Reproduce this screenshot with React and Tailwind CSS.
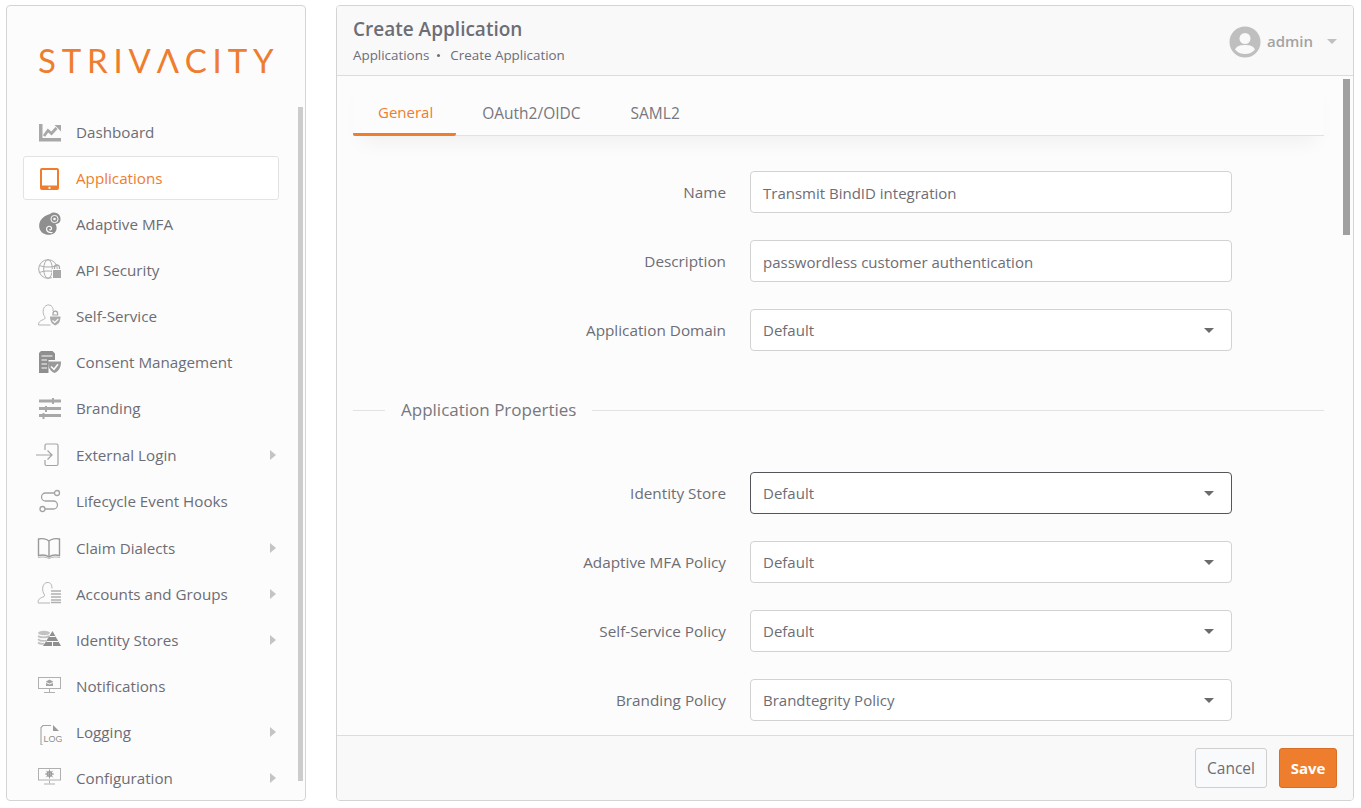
// App.jsx
import React from 'react';

const G = '#a3a3a3';

const iconProps = { width: 26, height: 26, viewBox: '0 0 26 26', fill: 'none' };

const DashboardIcon = () => (
    <svg {...iconProps}>
        <path d="M3 5h3.500v14H25v3.500H3z" fill="#a8a8a8" />
        <path d="M8 17l4-5.500 3.500 3 5-5.500" stroke="#a8a8a8" strokeWidth="2.800" />
        <path d="M18.500 6H25v6.500z" fill="#a8a8a8" />
    </svg>
);

const TabletIcon = () => (
    <svg {...iconProps}>
        <rect x="4" y="3" width="19" height="22" rx="2" fill="#ef7d2e" />
        <rect x="6" y="5" width="15" height="15.500" fill="#fff" />
        <rect x="12.500" y="21.800" width="2" height="2" fill="#fff" />
    </svg>
);

const ChameleonIcon = () => (
    <svg {...iconProps}>
        <path d="M14 3a6.500 6.500 0 0 1 10.500 5.500c0 3-2.500 4.500-5 4.500 1.800 3 1.500 6.500-1 9-2.800 2.200-7.500 2.500-11 .5C3 20 2 14 4.500 9.500 6.500 6 10.500 4 14 3z" fill="#8f8f8f" />
        <circle cx="18.500" cy="8" r="3.600" fill="#8f8f8f" stroke="#fcfcfc" strokeWidth="1" />
        <circle cx="18.500" cy="8" r="1.300" fill="#fcfcfc" />
        <path d="M16.500 21.500c-3.500.5-6-1-6-3.500s3-3.500 4.500-2 0 3.500-1.800 2.500" stroke="#fcfcfc" strokeWidth="1.200" />
    </svg>
);

const GlobeLockIcon = () => (
    <svg {...iconProps}>
        <circle cx="12" cy="12" r="9.300" stroke="#ababab" strokeWidth="1" />
        <ellipse cx="12" cy="12" rx="4.300" ry="9.300" stroke="#ababab" strokeWidth="1" />
        <path d="M3.500 8.500c5 2 12 2 17 0M3.500 15.500c5-2 12-2 17 0" stroke="#ababab" strokeWidth="1" />
        <rect x="16.500" y="12.500" width="9" height="9" fill="#a8a8a8" stroke="#fcfcfc" strokeWidth="1" />
        <path d="M18.500 12v-1.500a2.500 2.500 0 0 1 5 0V12" stroke="#a8a8a8" strokeWidth="1.300" />
    </svg>
);

const SelfServiceIcon = () => (
    <svg {...iconProps}>
        <g transform="translate(0 -1.500)">
            <path d="M2.500 23.500c0-4 3-4.500 6-6 1-1 .5-2-.5-3.500-1.500-3-1.500-9 3.500-10.500 4-.5 6 2.500 5.500 6" stroke="#b5b5b5" strokeWidth="1" />
            <path d="M2.500 23.500h12" stroke="#b5b5b5" strokeWidth="1" />
            <path d="M17 12a2.300 2.300 0 0 1 4.600 0v1.500H17z" stroke={G} strokeWidth="1.200" />
            <path d="M14 15h10.500c0 4.500-1.500 7.500-5.200 9-3.800-1.500-5.300-4.500-5.300-9z" fill="#ababab" />
            <path d="M16.500 19l2.300 2 3.500-3.500" stroke="#fcfcfc" strokeWidth="1.200" />
        </g>
    </svg>
);

const ConsentIcon = () => (
    <svg {...iconProps}>
        <path d="M5 2h11.500L19 4.500V11h-6.500v13H3V4z" fill="#8f8f8f" />
        <path d="M5.500 7h11M5.500 11h5.500M5.500 15h5.500M5.500 19h5.500" stroke="#fcfcfc" strokeWidth="1.200" />
        <path d="M12 12.500h13c0 6-2 9.500-6.500 11.500-4.500-2-6.500-5.500-6.500-11.500z" fill="#9a9a9a" />
        <path d="M15 17.500l3 2.800 4-5" stroke="#fcfcfc" strokeWidth="1.500" />
    </svg>
);

const SlidersIcon = () => (
    <svg {...iconProps}>
        <path d="M3 6h22M3 13.500h22M3 20.500h22" stroke="#a8a8a8" strokeWidth="3" />
        <path d="M17 3v6M10 11v6M7.500 18v6" stroke="#a8a8a8" strokeWidth="2" />
    </svg>
);

const LoginIcon = () => (
    <svg {...iconProps}>
        <path d="M9 8V3.500a1.500 1.500 0 0 1 1.500-1.500h10A1.500 1.500 0 0 1 22 3.500v18.500a1.500 1.500 0 0 1-1.500 1.500h-10A1.500 1.500 0 0 1 9 22v-4" stroke={G} strokeWidth="1.200" />
        <path d="M0 13h16M11.500 8.500L16 13l-4.500 4.500" stroke={G} strokeWidth="1.200" />
    </svg>
);

const HooksIcon = () => (
    <svg {...iconProps}>
        <path d="M18 5h-8.500a4 4 0 0 0 0 8h8a4 4 0 0 1 0 8H9" stroke={G} strokeWidth="1.300" />
        <circle cx="21" cy="5" r="2.500" stroke={G} strokeWidth="1.300" />
        <circle cx="6.500" cy="21" r="2.500" stroke={G} strokeWidth="1.300" />
    </svg>
);

const BookIcon = () => (
    <svg {...iconProps}>
        <path d="M13 6c-2-2-7-3-10.500-2v16.500c4-1 8-.5 10.500 1.500 2.500-2 6.500-2.500 10.500-1.500V4C20 3 15 4 13 6zM13 6v16" stroke="#9a9a9a" strokeWidth="1.400" />
        <path d="M2 22.500c4-1 8-.5 11 1 3-1.500 7-2 11-1" stroke="#b5b5b5" strokeWidth="1" />
    </svg>
);

const AccountsIcon = () => (
    <svg {...iconProps}>
        <path d="M2 21.500c0-4 3-4.500 6-6 1-1 .5-2-.5-3.500C6 9 6 2.500 11 1.500c3.500-.3 5 2 5 6" stroke="#b5b5b5" strokeWidth="1" />
        <path d="M2 22h12" stroke="#b5b5b5" strokeWidth="1" />
        <path d="M15 10h10M15 13h10M15 16h10M15 19h10M15 21.500h10" stroke="#b0b0b0" strokeWidth="1.400" />
    </svg>
);

const StoresIcon = () => (
    <svg {...iconProps}>
        <ellipse cx="8" cy="6" rx="6" ry="2.200" fill="#c2c2c2" />
        <path d="M2 9c2 1.800 9 1.800 11 0M2 12.200c2 1.500 6 1.800 8 1.300M2 15.500c1.500 1.200 4 1.500 6 1.200" stroke="#c2c2c2" strokeWidth="1.700" />
        <path d="M16.500 4l8.500 15H7z" fill="#8f8f8f" />
        <path d="M10.500 14.500h12M16.500 14.500v5M13.500 9.500h6" stroke="#fcfcfc" strokeWidth="1" />
    </svg>
);

const NotificationsIcon = () => (
    <svg {...iconProps}>
        <rect x="2.500" y="4.500" width="22" height="11" stroke="#b0b0b0" strokeWidth="1" />
        <path d="M13.500 16v3M8 19.500h11" stroke="#b0b0b0" strokeWidth="1" />
        <path d="M10 8.500l3.500-2 3.500 2v4.500h-7z" fill="#a3a3a3" />
        <path d="M10 9.500l3.500 1.500 3.500-1.500" stroke="#fcfcfc" strokeWidth="1" />
    </svg>
);

const LogIcon = () => (
    <svg {...iconProps}>
        <path d="M15 6.500H7L5 8.500v17.500h2" stroke={G} strokeWidth="1.100" />
        <path d="M17 6l6 6h-6z" fill="#9a9a9a" />
        <text x="7.500" y="22.500" fontSize="9" fill="#8f8f8f" fontFamily="Liberation Sans, sans-serif">LOG</text>
    </svg>
);

const ConfigIcon = () => (
    <svg {...iconProps}>
        <rect x="2.500" y="3.500" width="22" height="11.500" stroke="#b0b0b0" strokeWidth="1" />
        <path d="M13.500 15.500v3M8 19h11" stroke="#b0b0b0" strokeWidth="1" />
        <circle cx="13.500" cy="9" r="2.300" stroke="#9a9a9a" strokeWidth="1.200" />
        <path d="M13.500 4.500v9M9 9h9M10.300 5.800l6.400 6.400M16.700 5.800l-6.400 6.400" stroke="#9a9a9a" strokeWidth="1" />
    </svg>
);

const menuItems = [
    { label: 'Dashboard', icon: DashboardIcon },
    { label: 'Applications', icon: TabletIcon, active: true },
    { label: 'Adaptive MFA', icon: ChameleonIcon },
    { label: 'API Security', icon: GlobeLockIcon },
    { label: 'Self-Service', icon: SelfServiceIcon },
    { label: 'Consent Management', icon: ConsentIcon },
    { label: 'Branding', icon: SlidersIcon },
    { label: 'External Login', icon: LoginIcon, arrow: true, spaced: true },
    { label: 'Lifecycle Event Hooks', icon: HooksIcon },
    { label: 'Claim Dialects', icon: BookIcon, arrow: true, spaced: true },
    { label: 'Accounts and Groups', icon: AccountsIcon, arrow: true },
    { label: 'Identity Stores', icon: StoresIcon, arrow: true },
    { label: 'Notifications', icon: NotificationsIcon },
    { label: 'Logging', icon: LogIcon, arrow: true },
    { label: 'Configuration', icon: ConfigIcon, arrow: true },
];

const Caret = ({ className }) => (
    <span className={`w-0 h-0 border-x-[5px] border-x-transparent border-t-[5px] ${className}`} />
);

const MenuItem = ({ item }) => {
    const Icon = item.icon;
    return (
        <div className={item.spaced ? 'pt-[2px] pb-[1px]' : 'py-[1px]'}>
            <div
                className={`h-[44px] flex items-center pl-[12px] pr-[2px] rounded-[3px] border text-[15.2px] ${
                    item.active
                        ? 'bg-white border-[#e3e3e3] text-[#ef7d2e]'
                        : 'border-transparent text-[#6d6d75]'
                }`}
            >
                <span className="w-[40px] flex-shrink-0"><Icon /></span>
                <span className="flex-1 whitespace-nowrap">{item.label}</span>
                {item.arrow && (
                    <span className="w-0 h-0 border-y-[5px] border-y-transparent border-l-[6px] border-l-[#c4c4c4]" />
                )}
            </div>
        </div>
    );
};

const FormRow = ({ label, value, select, focused }) => (
    <div className="flex items-center h-[42px] mb-[27px]">
        <label className="w-[373px] text-right text-[15.3px] text-[#6d6d75] whitespace-nowrap">{label}</label>
        <div
            className={`ml-[24px] w-[482px] h-[42px] flex items-center justify-between px-[12px] bg-white rounded-[4px] border text-[15px] text-[#6d6d75] ${
                focused ? 'border-[#55555a]' : 'border-[#d2d2d2]'
            } ${select ? '' : 'pt-[2px]'}`}
        >
            <span>{value}</span>
            {select && <Caret className="border-t-[#6b6b6b] mr-[5px]" />}
        </div>
    </div>
);

export default function App() {
    return (
        <div
            className="w-[1361px] h-[808px] bg-white flex gap-[30px] pl-[6px] pt-[5px] pb-[7px] overflow-hidden"
            style={{ fontFamily: '"Open Sans", sans-serif' }}
        >
            {/* Sidebar */}
            <aside className="relative w-[300px] h-full bg-[#fcfcfc] border border-[#d4d4d4] rounded-[4px] overflow-hidden">
                <div className="h-[103px] pl-[31px] pt-[29px] text-[33px] leading-[50px] font-normal text-[#ef7d2e] tracking-[5.800px] whitespace-nowrap" style={{ fontFamily: 'Lato, sans-serif' }}>
                    STRIVΛCITY
                </div>
                <nav className="ml-[16px] w-[256px]">
                    {menuItems.map((item) => <MenuItem key={item.label} item={item} />)}
                </nav>
                <div className="absolute left-[291px] top-[101px] w-[5px] h-[674px] bg-[#cccccc]" />
            </aside>

            {/* Main panel */}
            <main className="relative w-[1018px] h-full bg-[#fcfcfc] border border-[#d4d4d4] rounded-[4px] overflow-hidden flex flex-col">
                <header className="h-[70px] flex-shrink-0 bg-[#f9f9f9] border-b border-[#dcdcdc] flex justify-between pl-[16px] pr-[16px]">
                    <div>
                        <h1 className="mt-[10px] text-[19px] leading-[26px] font-semibold text-[#6d6d75]">Create Application</h1>
                        <div className="mt-[4px] text-[13.400px] leading-[18px] text-[#6d6d75] flex items-center whitespace-nowrap">
                            Applications
                            <span className="ml-[8px] mr-[10px] w-[3px] h-[3px] rounded-full bg-[#6d6d75]" />
                            Create Application
                        </div>
                    </div>
                    <div className="flex items-center pt-[2px]">
                        <svg width="32" height="32" viewBox="0 0 32 32">
                            <circle cx="16" cy="16" r="15.500" fill="#bfbfbf" />
                            <circle cx="16" cy="12.500" r="5.500" fill="#f9f9f9" />
                            <path d="M6 23.500c2-4 6-4.500 10-4.500s8 .5 10 4.500c-2.500 3-6 4.500-10 4.500s-7.500-1.500-10-4.500z" fill="#f9f9f9" />
                        </svg>
                        <span className="ml-[6px] text-[15px] font-semibold text-[#a3a3a3]">admin</span>
                        <Caret className="ml-[14px] border-t-[#c0c0c0]" />
                    </div>
                </header>

                <div className="flex-1 min-h-0 overflow-hidden pl-[16px] pr-[29px]">
                    {/* Tabs */}
                    <div className="h-[60px] flex items-end border-b border-[#e2e2e2] shadow-[0_14px_20px_-8px_rgba(0,0,0,0.05)]">
                        <div className="h-[37px] -mb-px pt-[2px] pl-[25px] pr-[23px] text-[15px] leading-[22px] text-[#ef7d2e] border-b-[3px] border-[#ef7d2e] rounded-b-[2px]">General</div>
                        <div className="h-[37px] pt-[4px] pl-[26px] pr-[25px] text-[15.500px] leading-[22px] text-[#77777d]">OAuth2/OIDC</div>
                        <div className="h-[37px] pt-[4px] pl-[25px] text-[15.500px] leading-[22px] text-[#77777d]">SAML2</div>
                    </div>

                    <div className="pt-[35px]">
                        <FormRow label="Name" value="Transmit BindID integration" />
                        <FormRow label="Description" value="passwordless customer authentication" />
                        <FormRow label="Application Domain" value="Default" select />

                        <div className="flex items-center h-[40px] mt-[39px] mb-[42px] text-[17px] text-[#77777d]">
                            <span className="w-[32px] h-px bg-[#e2e2e2]" />
                            <span className="mx-[16px] whitespace-nowrap">Application Properties</span>
                            <span className="flex-1 h-px bg-[#e2e2e2]" />
                        </div>

                        <FormRow label="Identity Store" value="Default" select focused />
                        <FormRow label="Adaptive MFA Policy" value="Default" select />
                        <FormRow label="Self-Service Policy" value="Default" select />
                        <FormRow label="Branding Policy" value="Brandtegrity Policy" select />
                    </div>
                </div>

                <footer className="h-[65px] flex-shrink-0 bg-[#f9f9f9] border-t border-[#dcdcdc] flex items-center justify-end gap-[12px] pr-[16px]">
                    <button className="h-[40px] w-[72px] pt-[2px] rounded-[3px] border border-[#cfcfcf] bg-[#f9fafb] text-[15.500px] font-medium text-[#6d6d75]">Cancel</button>
                    <button className="h-[40px] w-[58px] rounded-[3px] border border-[#d96f27] bg-[#ef7d2e] text-[15px] font-bold text-white">Save</button>
                </footer>

                <div className="absolute left-[1006px] top-[73px] w-[7px] h-[156px] bg-[#a0a0a0]" />
            </main>
        </div>
    );
}
